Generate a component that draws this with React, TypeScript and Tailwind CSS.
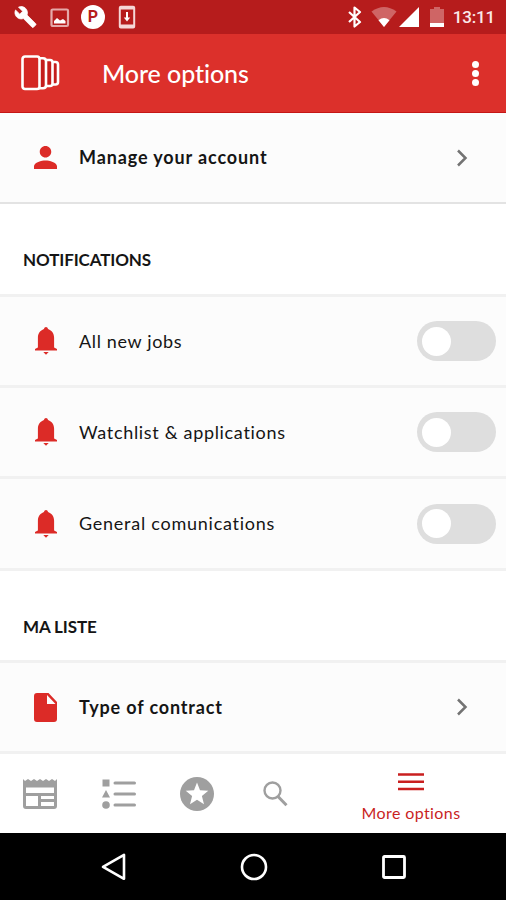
import { useState } from "react";
import type { ReactNode } from "react";

interface OptionRowProps {
  icon: ReactNode;
  label: string;
  labelClass: string;
  className?: string;
  children: ReactNode;
}

interface SectionTitleProps {
  title: string;
  className: string;
}

interface NotificationItem {
  id: string;
  label: string;
  labelClass: string;
  rowClass: string;
}

const notifications: NotificationItem[] = [
  { id: "jobs", label: "All new jobs", labelClass: "text-[18px] tracking-[0.65px]", rowClass: "h-[91px]" },
  { id: "watchlist", label: "Watchlist & applications", labelClass: "text-[18px] tracking-[0.68px]", rowClass: "h-[91px]" },
  { id: "general", label: "General comunications", labelClass: "text-[18px] tracking-[0.75px]", rowClass: "h-[92px]" },
];

function StatusBar() {
  return (
    <div className="flex h-[34px] items-center justify-between bg-[#b61c1c] pr-[11px] pl-[14px] text-white">
      <div className="flex items-center">
        <svg width="23" height="24" viewBox="0 0 24 24" fill="currentColor">
          <path
            d="M22.700 19l-9.100-9.100c.9-2.300.4-5-1.500-6.900-2-2-5-2.400-7.400-1.300L9 6 6 9 1.600 4.700C.4 7.100.9 10.100 2.900 12.100c1.900 1.900 4.600 2.400 6.900 1.500l9.100 9.100c.4.4 1 .4 1.400 0l2.300-2.300c.5-.4.5-1.100.1-1.400z"
            stroke="currentColor"
            strokeWidth="0.800"
          />
        </svg>
        <svg width="20" height="20" viewBox="0 0 20 20" className="mt-px ml-[13px]">
          <rect x="1.500" y="1.500" width="16.500" height="16.500" rx="1.200" fill="none" stroke="#e5a9a9" strokeWidth="2.200" />
          <path d="M4 15.500v-2.500l3-3 3 2.500 3-1.500 2.500 2v2.500z" fill="#fff" />
        </svg>
        <span className="ml-[11px] flex size-[24px] items-center justify-center rounded-full bg-white font-['Roboto',sans-serif] text-[16px] leading-none font-bold text-[#b61c1c]">
          P
        </span>
        <svg width="18" height="24" viewBox="0 0 18 24" className="ml-[13px]">
          <rect x="1.800" y="1.800" width="14.400" height="20.800" rx="1" fill="none" stroke="#f5d6d6" strokeWidth="2" />
          <path d="M2 3h14M2 21h14" stroke="#f5d6d6" strokeWidth="3" />
          <path d="M9 7v8" stroke="#fff" strokeWidth="2" />
          <path d="M5.800 12.500h6.400L9 16.500z" fill="#fff" />
        </svg>
      </div>
      <div className="flex items-center">
        <svg width="16" height="22" viewBox="0 0 16 22" className="mr-[8px]">
          <path d="M2 6l11 10-5.500 4.500V1.500L13 6 2 16" fill="none" stroke="#fff" strokeWidth="2.200" strokeLinejoin="round" />
        </svg>
        <svg width="26" height="22" viewBox="0 0 26 22" className="mr-[2px]">
          <path d="M.5 5.500Q13-3.500 25.500 5.500L13 21z" fill="#cf6565" />
          <path d="M7.500 14.200q5.500-4.400 11 0L13 21z" fill="#fff" />
        </svg>
        <svg width="20" height="20" viewBox="0 0 20 20" className="mr-[11px]">
          <path d="M20 0v20H0z" fill="#fff" />
        </svg>
        <svg width="14" height="22" viewBox="0 0 14 22" className="mr-[9px]">
          <path d="M4 1h6v2h4v14H0V3h4z" fill="#cf6565" />
          <path d="M0 17h14v4H0z" fill="#fff" />
        </svg>
        <span className="pt-[2px] font-['Roboto',sans-serif] text-[17px] font-medium tracking-[-0.2px] text-[#fbe9e9]">13:11</span>
      </div>
    </div>
  );
}

function Header() {
  return (
    <header className="flex h-[79px] items-center border-b border-[#c51616] bg-[#dc302b] pr-[27px] pl-[21px] text-white">
      <svg width="39" height="36" viewBox="0 0 39 36" fill="#c51d1c" stroke="#fff" strokeWidth="2.600" strokeLinejoin="round">
        <rect x="29" y="7" width="8" height="22.500" rx="2.500" />
        <rect x="23" y="5" width="8.500" height="26" rx="2.500" />
        <path d="M16 3.200h6q3 0 3 3v24q0 3-3 3h-6z" />
        <rect x="1.500" y="1.500" width="17" height="32.500" rx="2.500" fill="#d42723" />
      </svg>
      <h1 className="mt-px ml-[42px] text-[25px] font-medium tracking-[-0.08px]">More options</h1>
      <button type="button" aria-label="Menu" className="ml-auto flex flex-col gap-[2px]">
        <span className="size-[7px] rounded-full bg-white" />
        <span className="size-[7px] rounded-full bg-white" />
        <span className="size-[7px] rounded-full bg-white" />
      </button>
    </header>
  );
}

function OptionRow({ icon, label, labelClass, className = "", children }: OptionRowProps) {
  return (
    <div className={`flex items-center border-[#f1f1f1] bg-[#fcfcfc] pr-[10px] pl-[34px] ${className}`}>
      <span className="flex w-[23px] justify-center">{icon}</span>
      <span className={`ml-[22px] whitespace-nowrap text-[#151515] ${labelClass}`}>{label}</span>
      <div className="ml-auto">{children}</div>
    </div>
  );
}

function SectionTitle({ title, className }: SectionTitleProps) {
  return (
    <h2 className={`flex items-center border-b-[3px] border-[#f1f1f1] bg-white pl-[23px] text-[17px] font-bold tracking-[-0.12px] text-[#151515] ${className}`}>
      {title}
    </h2>
  );
}

function Toggle({ label }: { label: string }) {
  const [on, setOn] = useState<boolean>(false);

  return (
    <button
      type="button"
      role="switch"
      aria-checked={on}
      aria-label={label}
      onClick={() => setOn(!on)}
      className={`flex h-[40px] w-[79px] items-center rounded-full px-[5px] ${on ? "justify-end bg-[#dc302b]" : "bg-[#dedede]"}`}
    >
      <span className="size-[29px] rounded-full bg-white" />
    </button>
  );
}

function Chevron() {
  return (
    <svg width="12" height="18" viewBox="0 0 12 18" className="mr-[28px]">
      <path d="M2 1.500L9.500 9 2 16.500" fill="none" stroke="#737373" strokeWidth="2.500" />
    </svg>
  );
}

function BellIcon() {
  return (
    <svg width="22" height="28" viewBox="0 0 22 28" fill="#dc2b27">
      <path d="M11 0c1 0 1.700.8 2.100 2 3.800 1.500 6 4.600 6 8.700v9.800L22 22v1.500H0V22l2.900-1.500v-9.800C2.900 6.600 5.100 3.500 8.900 2 9.300.8 10 0 11 0z" />
      <path d="M8.300 25h5.400L11 27.800z" />
    </svg>
  );
}

function BottomNav() {
  return (
    <nav className="flex h-[79px] items-center bg-white pl-[23px] text-[#9f9f9f]">
      <svg width="34" height="30" viewBox="0 0 34 30" fill="currentColor">
        <path d="M0 0l2 2 3-2 3 2 3-2 3 2 3-2 3 2 3-2 3 2 3-2 3 2 2-2v27q0 3-3 3H3q-3 0-3-3zM3 8.500V14h28V8.500zM3 17v10h12V17zm15 0v3h13v-3zm0 6v4h13v-4z" fillRule="evenodd" />
      </svg>
      <svg width="34" height="30" viewBox="0 0 34 30" fill="currentColor" className="ml-[45px]">
        <path d="M.5.500h7v7h-7zM4 11l4 7.500H0z" />
        <circle cx="4" cy="26" r="3.800" />
        <path d="M13 4h19.500M13 15h19.500M13 26h19.500" stroke="currentColor" strokeWidth="3" strokeLinecap="round" />
      </svg>
      <svg width="34" height="34" viewBox="0 0 34 34" className="ml-[44px]">
        <circle cx="17" cy="17" r="17" fill="currentColor" />
        <path d="M17 5.500l3 7.700 8.300.5-6.400 5.300 2.100 8.200-7-4.500-7 4.500 2.100-8.200-6.400-5.300 8.300-.5z" fill="#fff" />
      </svg>
      <svg width="25" height="26" viewBox="0 0 25 26" className="ml-[49px]" fill="none" stroke="currentColor">
        <circle cx="9.500" cy="9.500" r="8" strokeWidth="2.400" />
        <path d="M15 15.500l8.500 8.800" strokeWidth="3" />
      </svg>
      <div className="ml-[73px] flex w-[100px] flex-col items-center pt-[9px] text-[#c91f1f]">
        <svg width="26" height="18" viewBox="0 0 26 18">
          <path d="M0 1.500h26M0 8.800h26M0 16h26" stroke="currentColor" strokeWidth="2.600" />
        </svg>
        <span className="mt-[12px] text-[16px] leading-[20px] tracking-[0.4px] whitespace-nowrap">More options</span>
      </div>
    </nav>
  );
}

function SystemNav() {
  return (
    <div className="flex h-[67px] items-center bg-black pl-[101px]">
      <svg width="25" height="28" viewBox="0 0 25 28" fill="none" stroke="#fff" strokeWidth="2.600" strokeLinejoin="round">
        <path d="M23 1.800v24L2 13.800z" />
      </svg>
      <svg width="28" height="28" viewBox="0 0 28 28" fill="none" stroke="#fff" strokeWidth="2.600" className="ml-[114px]">
        <circle cx="14" cy="14" r="12" />
      </svg>
      <svg width="26" height="26" viewBox="0 0 26 26" fill="none" stroke="#fff" strokeWidth="2.800" className="ml-[113px]">
        <rect x="2.500" y="2.500" width="21" height="21" rx="1" />
      </svg>
    </div>
  );
}

export default function App() {
  return (
    <div className="flex h-[900px] w-[506px] flex-col overflow-hidden bg-white font-['Lato','Liberation_Sans',sans-serif]">
      <StatusBar />
      <Header />
      <main>
        <OptionRow
          icon={
            <svg width="23" height="23" viewBox="4 4 16 16" fill="#dc2b27">
              <path d="M12 12c2.210 0 4-1.790 4-4s-1.790-4-4-4-4 1.790-4 4 1.790 4 4 4zm0 2c-2.670 0-8 1.340-8 4v2h16v-2c0-2.660-5.330-4-8-4z" />
            </svg>
          }
          label="Manage your account"
          labelClass="text-[18px] font-bold tracking-[0.88px]"
          className="h-[91px] border-b-2 !border-[#e3e3e3]"
        >
          <Chevron />
        </OptionRow>
        <SectionTitle title="NOTIFICATIONS" className="h-[93px] pt-[22px]" />
        {notifications.map((item) => (
          <OptionRow
            key={item.id}
            icon={<BellIcon />}
            label={item.label}
            labelClass={item.labelClass}
            className={`border-b-[3px] ${item.rowClass}`}
          >
            <Toggle label={item.label} />
          </OptionRow>
        ))}
        <SectionTitle title="MA LISTE" className="h-[92px] pt-[22px]" />
        <OptionRow
          icon={
            <svg width="23" height="29" viewBox="0 0 23 29" fill="#dc2b27">
              <path d="M3 0h11.500L23 9v17q0 3-3 3H3q-3 0-3-3V3Q0 0 3 0zm10 2v9h8.500z" fillRule="evenodd" />
            </svg>
          }
          label="Type of contract"
          labelClass="text-[18px] font-bold tracking-[0.85px]"
          className="h-[91px] border-b-[3px]"
        >
          <Chevron />
        </OptionRow>
      </main>
      <BottomNav />
      <SystemNav />
    </div>
  );
}
